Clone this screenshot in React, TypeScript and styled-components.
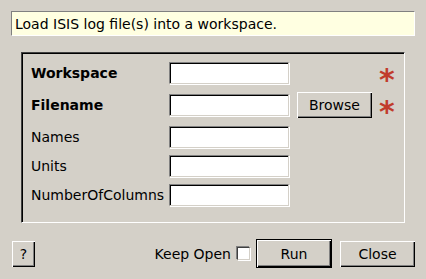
import React from "react";
import styled, { createGlobalStyle } from "styled-components";

const GlobalStyle = createGlobalStyle`
  html, body {
    margin: 0;
    padding: 0;
    background: #d4d0c8;
  }
  body {
    font-family: "DejaVu Sans", "Liberation Sans", sans-serif;
    font-size: 14px;
    color: #000;
  }
  * { box-sizing: border-box; }
`;

const Dialog = styled.div`
  width: 426px;
  height: 279px;
  padding: 11px;
  display: flex;
  flex-direction: column;
  background: #d4d0c8;
`;

const InfoBar = styled.div`
  height: 25px;
  background: #ffffe1;
  border-top: 1px solid #808080;
  border-left: 1px solid #808080;
  border-right: 1px solid #ffffff;
  border-bottom: 1px solid #ffffff;
  padding-left: 3px;
  display: flex;
  align-items: center;
  white-space: nowrap;
`;

const GroupBox = styled.div`
  margin: 16px 10px 0 10px;
  height: 171px;
  border-style: solid;
  border-width: 1px;
  border-color: #404040 #ffffff #ffffff #404040;
  box-shadow: inset 1px 1px 0 #000;
  padding: 4px 0 0 9px;
`;

const Form = styled.div`
  display: grid;
  grid-template-columns: 138px 120px 82px 30px;
  grid-template-rows: 32px 32px 32px 26px 32px;
  align-items: center;
`;

const Label = styled.div<{ $bold?: boolean }>`
  font-weight: ${(p) => (p.$bold ? "bold" : "normal")};
  white-space: nowrap;
`;

const TextInput = styled.input`
  width: 120px;
  height: 22px;
  margin: 0;
  padding: 0 2px;
  background: #fff;
  border-style: solid;
  border-width: 1px;
  border-color: #808080 #d4d0c8 #d4d0c8 #808080;
  box-shadow: inset 1px 1px 0 #000, 1px 1px 0 #fff;
  outline: none;
  font: inherit;
`;

const RaisedButton = styled.button<{ $w: number; $h?: number }>`
  width: ${(p) => p.$w}px;
  height: ${(p) => p.$h ?? 26}px;
  margin: 0;
  padding: 0;
  background: #d4d0c8;
  border: none;
  box-shadow: inset 1px 1px 0 #ffffff, inset -1px -1px 0 #000000,
    inset -2px -2px 0 #808080;
  font: inherit;
  color: #000;
  display: flex;
  align-items: center;
  justify-content: center;
`;

const DefaultButton = styled(RaisedButton)`
  border: 1px solid #000;
`;

const BrowseButton = styled(RaisedButton)`
  margin-left: 8px;
`;

const Required = styled.div`
  color: #c13b2c;
  font-weight: bold;
  font-size: 30px;
  line-height: 26px;
  height: 26px;
  padding-left: 8px;
  padding-top: 7px;
  overflow: visible;
`;

const ButtonRow = styled.div`
  margin-top: 16px;
  padding-left: 1px;
  display: flex;
  align-items: center;
`;

const Spacer = styled.div`
  flex: 1;
`;

const KeepOpen = styled.label`
  display: flex;
  align-items: center;
  white-space: nowrap;
  margin-right: 6px;
`;

const CheckBox = styled.span`
  width: 13px;
  height: 13px;
  margin-left: 6px;
  background: #fff;
  border-style: solid;
  border-width: 1px;
  border-color: #404040 #d4d0c8 #d4d0c8 #404040;
  box-shadow: 1px 1px 0 #fff, -1px -1px 0 #808080;
`;

const CloseWrap = styled.div`
  margin-left: 8px;
`;

export default function App() {
  return (
    <>
      <GlobalStyle />
      <Dialog>
        <InfoBar>Load ISIS log file(s) into a workspace.</InfoBar>
        <GroupBox>
          <Form>
            <Label $bold>Workspace</Label>
            <TextInput />
            <span />
            <Required>*</Required>

            <Label $bold>Filename</Label>
            <TextInput />
            <BrowseButton $w={75}>Browse</BrowseButton>
            <Required>*</Required>

            <Label>Names</Label>
            <TextInput />
            <span />
            <span />

            <Label>Units</Label>
            <TextInput />
            <span />
            <span />

            <Label>NumberOfColumns</Label>
            <TextInput />
            <span />
            <span />
          </Form>
        </GroupBox>
        <ButtonRow>
          <RaisedButton $w={23}>?</RaisedButton>
          <Spacer />
          <KeepOpen>
            Keep Open
            <CheckBox />
          </KeepOpen>
          <DefaultButton $w={76} $h={29}>Run</DefaultButton>
          <CloseWrap>
            <RaisedButton $w={75}>Close</RaisedButton>
          </CloseWrap>
        </ButtonRow>
      </Dialog>
    </>
  );
}
